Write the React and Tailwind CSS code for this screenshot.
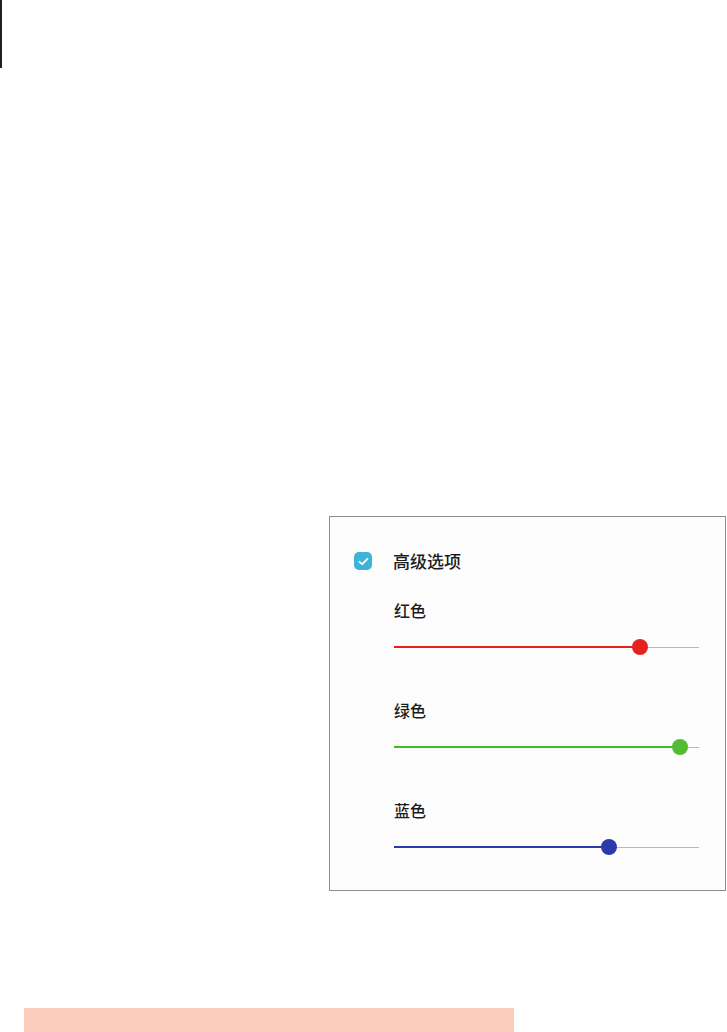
import React from "react";

const sliders = [
  { label: "红色", value: 0.807, track: "bg-[#e3211f]", thumb: "bg-[#e42320]" },
  { label: "绿色", value: 0.938, track: "bg-[#46b92a]", thumb: "bg-[#52bd33]" },
  { label: "蓝色", value: 0.705, track: "bg-[#2a3aa6]", thumb: "bg-[#2b3bab]" },
];

function Slider({ value, track, thumb }) {
  const pos = Math.round(value * 305);
  return (
    <div className="relative w-[305px] h-[16px] flex items-center">
      <div className="absolute left-0 right-0 h-px bg-[#b8b8b8]" />
      <div className={`absolute left-0 h-[2px] ${track}`} style={{ width: pos }} />
      <div
        className={`absolute top-0 w-[16px] h-[16px] rounded-full ${thumb}`}
        style={{ left: pos - 8 }}
      />
    </div>
  );
}

export default function App() {
  return (
    <div
      className="w-[727px] h-[1032px] bg-white overflow-hidden"
      style={{ fontFamily: '"Noto Sans CJK SC", "Noto Sans", sans-serif' }}
    >
      <div className="w-[2px] h-[68px] bg-[#231f20]" />

      <div className="mt-[448px] ml-[329px] w-[397px] h-[375px] border border-[#8c8c8c] bg-[#fdfdfd]">
        {/* checkbox row */}
        <div className="mt-[35px] ml-[24px] h-[18px] flex items-center gap-[21px]">
          <div className="w-[18px] h-[18px] rounded-[5px] bg-[#3db4d7] flex items-center justify-center">
            <svg width="11" height="9" viewBox="0 0 11 9" fill="none">
              <path
                d="M1.5 4.8 L4.2 7.2 L9.5 1.8"
                stroke="white"
                strokeWidth="1.8"
                strokeLinecap="round"
                strokeLinejoin="round"
              />
            </svg>
          </div>
          <span className="text-[17px] leading-[18px] font-medium text-[#1c1c1c]">高级选项</span>
        </div>

        <div className="ml-[64px] flex flex-col">
          {sliders.map((s, i) => (
            <div key={s.label} className={i === 0 ? "mt-[30px]" : "mt-[45px]"}>
              <div className="h-[20px] leading-[20px] text-[16px] font-medium text-[#1c1c1c]">
                {s.label}
              </div>
              <div className="mt-[19px]">
                <Slider value={s.value} track={s.track} thumb={s.thumb} />
              </div>
            </div>
          ))}
        </div>
      </div>

      <div className="mt-[117px] ml-[24px] w-[490px] h-[24px] bg-[#fbcbbb]" />
    </div>
  );
}
